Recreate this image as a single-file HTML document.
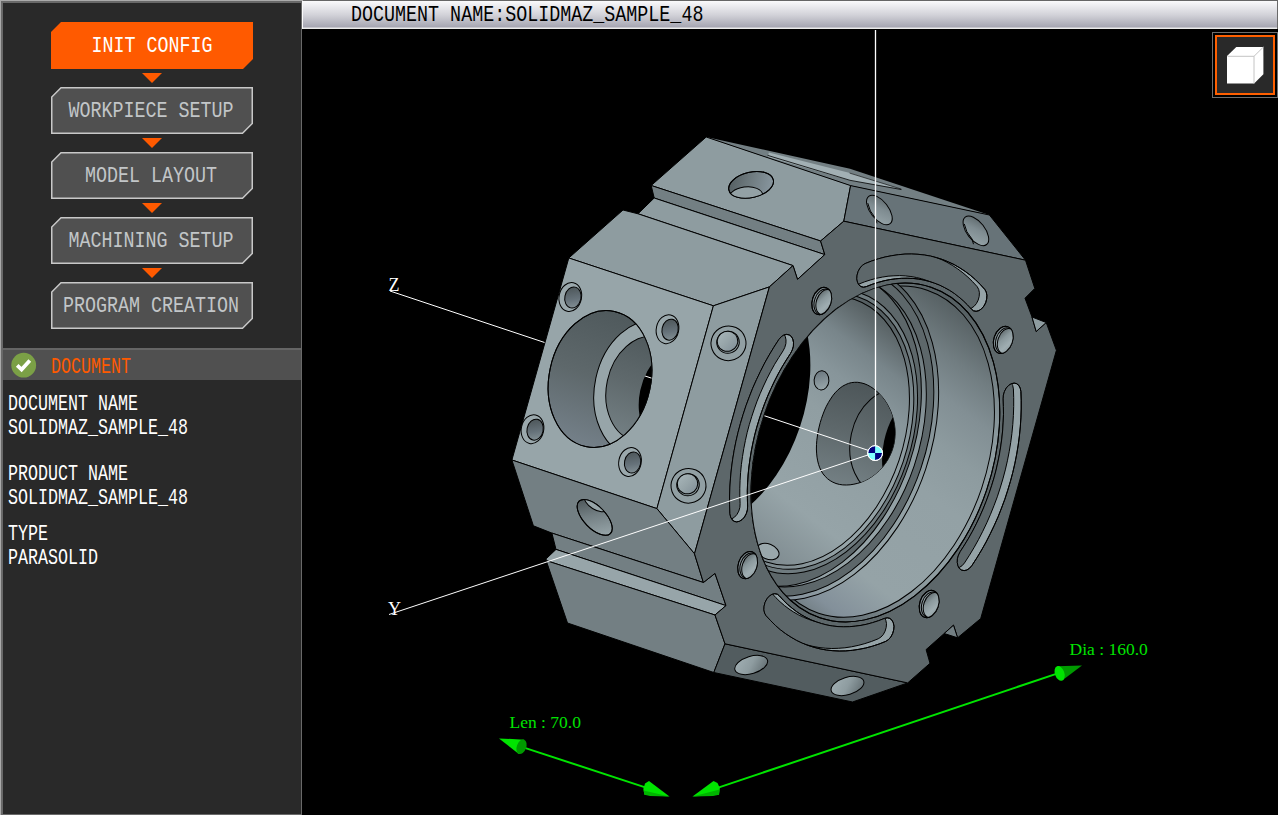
<!DOCTYPE html>
<html lang="en">
<head>
<meta charset="utf-8">
<title>SOLIDMAZ</title>
<style>
html,body{margin:0;padding:0;}
body{width:1280px;height:817px;overflow:hidden;background:#fff;position:relative;font-family:"Liberation Mono",monospace;}
#app{position:absolute;left:0;top:0;width:1278px;height:815px;background:#000;overflow:hidden;}
#left{position:absolute;left:0;top:0;width:302px;height:815px;box-sizing:border-box;background:#292929;border:1px solid #aaa;border-right:none;border-bottom:none;}
#left .inner{position:absolute;left:0;top:0;right:0;bottom:0;border:2px solid #696969;border-bottom-width:1px;border-right-width:1px;}
.btn{position:absolute;left:51px;width:202px;height:47px;}
.btn svg{position:absolute;left:0;top:0;}
.btn span{position:absolute;left:-50.7px;top:1.2px;width:302px;height:47px;line-height:47px;text-align:center;font-size:22.8px;color:#c2c6c8;white-space:pre;transform:scaleX(0.805);transform-origin:50% 50%;}
.btn.on span{color:#fff;}
.tri{position:absolute;left:142px;width:0;height:0;border-left:10px solid transparent;border-right:10px solid transparent;border-top:10px solid #ff5a00;}
#docbar{position:absolute;left:3px;top:348px;width:298px;height:32px;background:#505050;border-top:2px solid #656565;box-sizing:border-box;}
#docbar .t{position:absolute;left:48px;top:1.2px;height:32px;line-height:33px;font-size:21.2px;color:#ff5a00;transform:scaleX(0.786);transform-origin:0 50%;white-space:pre;}
.ln{position:absolute;left:8px;height:24px;line-height:24px;font-size:21.2px;color:#fff;white-space:pre;transform:scaleX(0.786);transform-origin:0 50%;}
#hdr{position:absolute;left:302px;top:0;width:976px;height:29px;box-sizing:border-box;border-left:1px solid #fafafa;border-right:1px solid #696969;border-top:1px solid #666;border-bottom:none;background:linear-gradient(#fbfbfb 0px,#f4f4f6 2px,#d2d2d8 14px,#a6a6b2 26px,#e8e8e8 27px,#eee 28px);}
#hdr span{position:absolute;left:47.8px;top:1px;height:28px;line-height:27px;font-size:22.8px;color:#000;white-space:pre;transform:scaleX(0.805);transform-origin:0 50%;}
#cube{position:absolute;left:1212px;top:32px;width:66px;height:66px;box-sizing:border-box;border:1px solid #6e6e6e;background:#000;}
#cube i{position:absolute;left:2px;top:2px;width:60px;height:60px;box-sizing:border-box;border:2px solid #ff5f00;background:#292929;}
#scene{position:absolute;left:0;top:0;}
</style>
</head>
<body>
<div id="app">
<div id="left"><div class="inner"></div></div>
<div class="btn on" style="top:22px"><svg width="202" height="47"><polygon points="10,0 202,0 202,37 192,47 0,47 0,10" fill="#ff5a00"/></svg><span style="margin-left:1px">INIT CONFIG</span></div>
<div class="tri" style="top:73px"></div>
<div class="btn" style="top:87px"><svg width="202" height="47"><polygon points="10,0.75 201.25,0.75 201.25,36.5 191.5,46.25 0.75,46.25 0.75,10" fill="#505050" stroke="#c8c8c8" stroke-width="1.5"/></svg><span>WORKPIECE SETUP</span></div>
<div class="tri" style="top:138px"></div>
<div class="btn" style="top:152px"><svg width="202" height="47"><polygon points="10,0.75 201.25,0.75 201.25,36.5 191.5,46.25 0.75,46.25 0.75,10" fill="#505050" stroke="#c8c8c8" stroke-width="1.5"/></svg><span>MODEL LAYOUT</span></div>
<div class="tri" style="top:203px"></div>
<div class="btn" style="top:217px"><svg width="202" height="47"><polygon points="10,0.75 201.25,0.75 201.25,36.5 191.5,46.25 0.75,46.25 0.75,10" fill="#505050" stroke="#c8c8c8" stroke-width="1.5"/></svg><span>MACHINING SETUP</span></div>
<div class="tri" style="top:268px"></div>
<div class="btn" style="top:282px"><svg width="202" height="47"><polygon points="10,0.75 201.25,0.75 201.25,36.5 191.5,46.25 0.75,46.25 0.75,10" fill="#505050" stroke="#c8c8c8" stroke-width="1.5"/></svg><span>PROGRAM CREATION</span></div>
<div id="docbar"><svg width="40" height="32" style="position:absolute;left:8px;top:1.8px"><circle cx="12.7" cy="13.2" r="12.4" fill="#7ba046"/><path d="M6.2 13.4 L10.6 17.6 L18.8 8.6" fill="none" stroke="#fff" stroke-width="3.7" stroke-linecap="butt" stroke-linejoin="miter"/></svg><span class="t">DOCUMENT</span></div>
<div class="ln" style="top:391.5px">DOCUMENT NAME</div>
<div class="ln" style="top:415.5px">SOLIDMAZ_SAMPLE_48</div>
<div class="ln" style="top:461.5px">PRODUCT NAME</div>
<div class="ln" style="top:485.5px">SOLIDMAZ_SAMPLE_48</div>
<div class="ln" style="top:521.5px">TYPE</div>
<div class="ln" style="top:545.5px">PARASOLID</div>
<div id="hdr"><span>DOCUMENT NAME:SOLIDMAZ_SAMPLE_48</span></div>
<svg id="scene" width="1280" height="817" viewBox="0 0 1280 817">
<defs><clipPath id="cs0"><polygon points="865.1,263.6 871.7,261.0 878.4,258.8 885.1,257.0 891.8,255.7 898.4,254.7 905.0,254.1 911.5,254.0 918.0,254.3 924.3,255.0 930.6,256.1 936.7,257.7 942.7,259.6 948.6,262.0 954.3,264.7 959.8,267.9 965.2,271.4 970.4,275.3 975.4,279.6 980.1,284.3 984.7,289.3 986.2,291.9 986.9,295.2 986.7,298.9 985.7,302.7 983.9,306.1 981.6,308.8 978.9,310.6 976.1,311.3 973.5,310.8 971.4,309.1 967.4,304.7 963.2,300.6 958.8,296.9 954.3,293.4 949.6,290.3 944.7,287.6 939.7,285.1 934.5,283.1 929.3,281.4 923.9,280.0 918.4,279.0 912.8,278.4 907.1,278.2 901.4,278.3 895.6,278.8 889.8,279.6 883.9,280.8 878.1,282.4 872.2,284.3 866.3,286.6 863.5,287.2 861.0,286.6 858.9,284.9 857.5,282.2 856.8,278.8 857.1,275.1 858.2,271.4 860.0,268.0 862.4,265.3"/></clipPath><clipPath id="cs1"><polygon points="1020.9,391.4 1021.2,400.2 1021.2,409.0 1020.9,417.9 1020.3,426.9 1019.4,436.0 1018.2,445.1 1016.7,454.2 1014.9,463.3 1012.8,472.4 1010.4,481.4 1007.7,490.4 1004.8,499.3 1001.5,508.1 998.1,516.8 994.3,525.3 990.3,533.7 986.1,542.0 981.6,550.0 976.9,557.8 972.0,565.4 969.6,568.2 966.9,570.0 964.2,570.6 961.6,570.1 959.4,568.5 958.0,565.9 957.3,562.6 957.4,558.8 958.5,555.1 960.2,551.7 964.5,545.0 968.7,538.1 972.6,531.1 976.3,523.9 979.8,516.5 983.1,509.0 986.2,501.3 989.0,493.6 991.6,485.8 994.0,477.9 996.1,470.0 997.9,462.0 999.5,454.0 1000.8,446.0 1001.9,438.0 1002.7,430.0 1003.2,422.1 1003.5,414.3 1003.4,406.5 1003.2,398.9 1003.4,395.1 1004.5,391.4 1006.3,388.0 1008.7,385.4 1011.4,383.7 1014.2,383.1 1016.7,383.7 1018.8,385.4 1020.2,388.1"/></clipPath><clipPath id="cs2"><polygon points="885.7,641.4 879.1,644.0 872.4,646.2 865.7,648.0 859.0,649.3 852.4,650.3 845.8,650.9 839.3,651.0 832.8,650.7 826.5,650.0 820.2,648.9 814.1,647.3 808.1,645.4 802.2,643.0 796.5,640.3 791.0,637.1 785.6,633.6 780.4,629.7 775.4,625.4 770.7,620.7 766.1,615.7 764.6,613.1 763.9,609.8 764.1,606.1 765.1,602.3 766.9,598.9 769.2,596.2 771.9,594.4 774.7,593.7 777.3,594.2 779.4,595.9 783.4,600.3 787.6,604.4 792.0,608.1 796.5,611.6 801.2,614.7 806.1,617.4 811.1,619.9 816.3,621.9 821.5,623.6 826.9,625.0 832.4,626.0 838.0,626.6 843.7,626.8 849.4,626.7 855.2,626.2 861.0,625.4 866.9,624.2 872.7,622.6 878.6,620.7 884.5,618.4 887.3,617.8 889.8,618.4 891.9,620.1 893.3,622.8 894.0,626.2 893.7,629.9 892.6,633.6 890.8,637.0 888.4,639.7"/></clipPath><clipPath id="cs3"><polygon points="729.9,513.6 729.6,504.8 729.6,496.0 729.9,487.1 730.5,478.1 731.4,469.0 732.6,459.9 734.1,450.8 735.9,441.7 738.0,432.6 740.4,423.6 743.1,414.6 746.0,405.7 749.3,396.9 752.7,388.2 756.5,379.7 760.5,371.3 764.7,363.0 769.2,355.0 773.9,347.2 778.8,339.6 781.2,336.8 783.9,335.0 786.6,334.4 789.2,334.9 791.4,336.5 792.8,339.1 793.5,342.4 793.4,346.2 792.3,349.9 790.6,353.3 786.3,360.0 782.1,366.9 778.2,373.9 774.5,381.1 771.0,388.5 767.7,396.0 764.6,403.7 761.8,411.4 759.2,419.2 756.8,427.1 754.7,435.0 752.9,443.0 751.3,451.0 750.0,459.0 748.9,467.0 748.1,475.0 747.6,482.9 747.3,490.7 747.4,498.5 747.6,506.1 747.4,509.9 746.3,513.6 744.5,517.0 742.1,519.6 739.4,521.3 736.6,521.9 734.1,521.3 732.0,519.6 730.6,516.9"/></clipPath><linearGradient id="gbh" x1="0.1" y1="0.1" x2="0.9" y2="0.8"><stop offset="0" stop-color="#5f696c"/><stop offset="0.35" stop-color="#8a989c"/><stop offset="0.7" stop-color="#9fadb1"/><stop offset="1" stop-color="#8e9ca0"/></linearGradient><clipPath id="cbh45"><ellipse cx="1003.2" cy="339.9" rx="9.4" ry="14.0" transform="rotate(18.6 1003.2 339.9)"/></clipPath><clipPath id="cbh135"><ellipse cx="929.1" cy="604.0" rx="9.4" ry="14.0" transform="rotate(18.6 929.1 604.0)"/></clipPath><clipPath id="cbh225"><ellipse cx="747.6" cy="565.1" rx="9.4" ry="14.0" transform="rotate(18.6 747.6 565.1)"/></clipPath><clipPath id="cbh315"><ellipse cx="821.7" cy="301.0" rx="9.4" ry="14.0" transform="rotate(18.6 821.7 301.0)"/></clipPath><linearGradient id="gc1" gradientUnits="userSpaceOnUse" x1="902.9" y1="278.1" x2="791.8" y2="608.0"><stop offset="0" stop-color="#525c5f"/><stop offset="0.04" stop-color="#5a6467"/><stop offset="0.15" stop-color="#717d81"/><stop offset="0.25" stop-color="#828f94"/><stop offset="0.37" stop-color="#8d9b9f"/><stop offset="0.5" stop-color="#93a1a5"/><stop offset="0.8" stop-color="#95a3a7"/><stop offset="0.93" stop-color="#83909a"/><stop offset="1" stop-color="#6c787c"/></linearGradient><linearGradient id="gc2" gradientUnits="userSpaceOnUse" x1="807.5" y1="283.0" x2="718.9" y2="546.5"><stop offset="0" stop-color="#525c5f"/><stop offset="0.05" stop-color="#5e686b"/><stop offset="0.16" stop-color="#78858a"/><stop offset="0.28" stop-color="#87959a"/><stop offset="0.42" stop-color="#909ea2"/><stop offset="0.75" stop-color="#96a4a8"/><stop offset="1" stop-color="#7b878c"/></linearGradient><linearGradient id="gch" gradientUnits="userSpaceOnUse" x1="902.9" y1="278.1" x2="791.8" y2="608.0"><stop offset="0" stop-color="#4f595c"/><stop offset="0.05" stop-color="#5f696c"/><stop offset="0.12" stop-color="#737f83"/><stop offset="0.22" stop-color="#87959a"/><stop offset="0.3" stop-color="#8e9ca0"/><stop offset="0.7" stop-color="#8e9ca0"/><stop offset="0.82" stop-color="#7b878c"/><stop offset="0.92" stop-color="#687479"/><stop offset="1" stop-color="#5c6669"/></linearGradient><clipPath id="cpb"><ellipse cx="875.4" cy="452.5" rx="117.4" ry="174.3" transform="rotate(18.6 875.4 452.5)"/></clipPath><linearGradient id="gsh" x1="0" y1="0" x2="0.3" y2="1"><stop offset="0" stop-color="#66727a"/><stop offset="1" stop-color="#96a4a8"/></linearGradient><clipPath id="csb"><polygon points="864.0,383.6 860.8,382.8 857.7,382.3 854.6,382.3 851.5,382.6 848.5,383.4 845.6,384.6 842.8,386.1 840.1,388.0 837.5,390.3 835.0,392.9 832.7,395.8 830.5,399.1 828.4,402.5 826.4,406.2 824.6,410.1 823.0,414.2 821.5,418.4 820.2,422.7 819.1,427.1 818.1,431.5 817.4,436.0 816.8,440.4 816.5,444.7 816.4,449.0 816.6,453.1 817.0,457.1 817.7,460.9 818.6,464.5 819.8,467.9 821.3,471.0 823.1,473.9 825.2,476.4 827.5,478.7 830.1,480.6 832.9,482.2 836.0,483.5 839.3,484.4 842.7,484.9 846.4,485.0 850.1,484.8 853.9,484.2 857.8,483.3 861.7,482.0 865.5,480.3 869.3,478.3 872.9,475.9 876.3,473.2 879.6,470.2 882.6,467.0 885.4,463.4 887.8,459.7 889.9,455.7 891.7,451.5 893.1,447.3 894.2,442.8 894.8,438.4 895.1,433.8 895.0,429.3 894.5,424.8 893.6,420.3 892.4,416.0 890.9,411.7 889.1,407.7 887.0,403.8 884.7,400.2 882.1,396.8 879.3,393.8 876.5,391.0 873.4,388.6 870.4,386.6 867.2,384.9"/></clipPath><linearGradient id="gsb" gradientUnits="userSpaceOnUse" x1="870.0" y1="385.0" x2="845.0" y2="485.0"><stop offset="0" stop-color="#4d5659"/><stop offset="0.5" stop-color="#5e686b"/><stop offset="1" stop-color="#737f83"/></linearGradient><clipPath id="csb2"><ellipse cx="889.6" cy="442.1" rx="39.1" ry="53.0" transform="rotate(12.1 889.6 442.1)"/></clipPath><linearGradient id="glb" gradientUnits="userSpaceOnUse" x1="610.0" y1="310.0" x2="590.0" y2="450.0"><stop offset="0" stop-color="#4f595c"/><stop offset="0.5" stop-color="#5e686b"/><stop offset="1" stop-color="#75818a"/></linearGradient><linearGradient id="glb2" gradientUnits="userSpaceOnUse" x1="650.0" y1="335.0" x2="635.0" y2="440.0"><stop offset="0" stop-color="#4f595c"/><stop offset="0.5" stop-color="#5f696c"/><stop offset="1" stop-color="#737f83"/></linearGradient><clipPath id="clb0"><ellipse cx="600.0" cy="379.0" rx="50.9" ry="69.0" transform="rotate(12.1 600.0 379.0)"/></clipPath><clipPath id="clb1"><ellipse cx="645.6" cy="388.8" rx="39.1" ry="53.0" transform="rotate(12.1 645.6 388.8)"/></clipPath><clipPath id="clbz"><ellipse cx="678.5" cy="398.5" rx="39.1" ry="53.0" transform="rotate(12.1 678.5 398.5)"/></clipPath><linearGradient id="gsm" x1="0.3" y1="0" x2="0.6" y2="1"><stop offset="0" stop-color="#4c5558"/><stop offset="0.6" stop-color="#66727a"/><stop offset="1" stop-color="#828f94"/></linearGradient><linearGradient id="gst" x1="0.2" y1="0" x2="0.7" y2="1"><stop offset="0" stop-color="#a6b4b8"/><stop offset="0.5" stop-color="#97a5a9"/><stop offset="1" stop-color="#84929a"/></linearGradient><linearGradient id="gth" x1="0" y1="0" x2="1" y2="0.3"><stop offset="0" stop-color="#4f595c"/><stop offset="0.5" stop-color="#6c787c"/><stop offset="1" stop-color="#84929a"/></linearGradient><clipPath id="cth"><ellipse cx="751.1" cy="184.9" rx="22.8" ry="12.7" transform="rotate(-13.0 751.1 184.9)"/></clipPath><linearGradient id="gll" x1="0" y1="0.3" x2="1" y2="0.6"><stop offset="0" stop-color="#4c5558"/><stop offset="0.45" stop-color="#737f83"/><stop offset="1" stop-color="#97a5a9"/></linearGradient><clipPath id="cll"><ellipse cx="594.7" cy="517.4" rx="22.5" ry="11.0" transform="rotate(46.0 594.7 517.4)"/></clipPath><linearGradient id="gbd" x1="0" y1="0" x2="1" y2="1"><stop offset="0" stop-color="#566063"/><stop offset="0.45" stop-color="#7f8c91"/><stop offset="1" stop-color="#9aa8ac"/></linearGradient><linearGradient id="gbc" x1="0" y1="0" x2="1" y2="0.5"><stop offset="0" stop-color="#a3b1b5"/><stop offset="0.6" stop-color="#8e9ca0"/><stop offset="1" stop-color="#6c787c"/></linearGradient></defs>
<line x1="390" y1="291" x2="875" y2="452.6" stroke="#fff" stroke-width="1"/>
<polygon points="706.2,137.0 850.0,168.8 989.4,215.0 850.6,185.6" fill="#737f83" stroke="none" stroke-width="1" stroke-linejoin="round" />
<polygon points="768.8,152.5 850.0,173.0 900.0,188.8 850.0,180.5 768.0,157.0" fill="#a2b0b4" stroke="none" stroke-width="1" stroke-linejoin="round" />
<polyline points="768.0,155.5 850.0,180.3 901.0,189.5" fill="none" stroke="#000" stroke-width="0.8" stroke-linejoin="round" stroke-linecap="round" />
<polyline points="850.0,173.2 901.0,189.0" fill="none" stroke="#000" stroke-width="0.6" stroke-linejoin="round" stroke-linecap="round" />
<polygon points="706.2,137.0 651.2,185.5 820.6,241.0 843.8,221.2 850.6,185.6" fill="#8e9ca0" stroke="#000" stroke-width="1" stroke-linejoin="round" />
<polygon points="651.2,185.5 654.2,198.0 824.8,254.6 820.6,241.0" fill="#737f83" stroke="#000" stroke-width="1" stroke-linejoin="round" />
<polygon points="654.2,198.0 638.0,213.8 793.0,265.6 797.5,279.4 824.8,254.6" fill="#8e9ca0" stroke="#000" stroke-width="1" stroke-linejoin="round" />
<polygon points="623.0,210.0 568.8,258.0 713.4,305.8 769.4,286.9 793.0,265.6 638.0,213.8" fill="#8e9ca0" stroke="#000" stroke-width="1" stroke-linejoin="round" />
<polygon points="568.8,258.0 713.4,305.8 656.9,508.6 511.9,460.0" fill="#97a5a9" stroke="#000" stroke-width="1" stroke-linejoin="round" />
<polygon points="713.4,305.8 769.4,286.9 694.5,553.8 656.9,508.6" fill="#8e9ca0" stroke="#000" stroke-width="1" stroke-linejoin="round" />
<polygon points="511.9,460.0 656.9,508.6 694.5,553.8 703.4,582.5 551.9,533.1 533.4,525.8" fill="#737f83" stroke="#000" stroke-width="1" stroke-linejoin="round" />
<polygon points="551.9,533.1 703.4,582.5 715.0,573.4 726.0,605.6 556.0,549.4" fill="#737f83" stroke="#000" stroke-width="1" stroke-linejoin="round" />
<polygon points="556.0,549.4 726.0,605.6 715.0,615.0 546.2,560.6 546.2,558.8" fill="#97a5a9" stroke="#000" stroke-width="1" stroke-linejoin="round" />
<polygon points="546.2,560.6 715.0,615.0 725.0,643.8 713.8,672.5 567.5,623.0" fill="#737f83" stroke="#000" stroke-width="1" stroke-linejoin="round" />
<polygon points="725.0,643.8 713.8,672.5 852.5,702.0 907.7,682.9" fill="#525c5f" stroke="#000" stroke-width="1" stroke-linejoin="round" />
<polygon points="850.6,185.6 989.4,215.0 1025.5,260.2 843.8,221.2" fill="#677378" stroke="#000" stroke-width="1" stroke-linejoin="round" />
<polygon points="769.4,286.9 793.0,265.6 797.5,279.4 824.8,254.6 820.6,241.0 843.8,221.2 1025.5,260.2 1034.8,288.4 1025.0,298.2 1032.0,317.0 1036.2,331.5 1046.2,322.5 1056.4,350.3 980.7,618.6 957.6,637.8 953.5,625.2 944.2,633.5 926.1,649.6 930.0,663.3 907.7,682.9 725.0,643.8 715.0,615.0 726.0,605.6 715.0,573.4 703.4,582.5 694.5,553.8" fill="#5d676a" stroke="#000" stroke-width="1" stroke-linejoin="round" />
<polygon points="1032.0,317.0 1046.2,322.5 1036.2,331.5" fill="#8e9ca0" stroke="#000" stroke-width="1" stroke-linejoin="round" />
<polygon points="953.5,625.2 957.6,637.8 944.2,633.5" fill="#737f83" stroke="#000" stroke-width="1" stroke-linejoin="round" />
<polygon points="865.1,263.6 871.7,261.0 878.4,258.8 885.1,257.0 891.8,255.7 898.4,254.7 905.0,254.1 911.5,254.0 918.0,254.3 924.3,255.0 930.6,256.1 936.7,257.7 942.7,259.6 948.6,262.0 954.3,264.7 959.8,267.9 965.2,271.4 970.4,275.3 975.4,279.6 980.1,284.3 984.7,289.3 986.2,291.9 986.9,295.2 986.7,298.9 985.7,302.7 983.9,306.1 981.6,308.8 978.9,310.6 976.1,311.3 973.5,310.8 971.4,309.1 967.4,304.7 963.2,300.6 958.8,296.9 954.3,293.4 949.6,290.3 944.7,287.6 939.7,285.1 934.5,283.1 929.3,281.4 923.9,280.0 918.4,279.0 912.8,278.4 907.1,278.2 901.4,278.3 895.6,278.8 889.8,279.6 883.9,280.8 878.1,282.4 872.2,284.3 866.3,286.6 863.5,287.2 861.0,286.6 858.9,284.9 857.5,282.2 856.8,278.8 857.1,275.1 858.2,271.4 860.0,268.0 862.4,265.3" fill="#95a3a7" stroke="#000" stroke-width="1" stroke-linejoin="round" />
<g clip-path="url(#cs0)"><polygon points="857.6,261.1 864.2,258.5 870.9,256.3 877.6,254.5 884.3,253.1 890.9,252.2 897.5,251.6 904.0,251.5 910.5,251.8 916.8,252.5 923.1,253.6 929.2,255.1 935.2,257.1 941.1,259.4 946.8,262.2 952.3,265.3 957.7,268.9 962.9,272.8 967.9,277.1 972.6,281.7 977.2,286.7 978.7,289.4 979.4,292.7 979.2,296.4 978.2,300.1 976.4,303.6 974.1,306.3 971.4,308.1 968.6,308.8 966.0,308.2 963.9,306.6 959.9,302.2 955.7,298.1 951.3,294.4 946.8,290.9 942.1,287.8 937.2,285.0 932.2,282.6 927.0,280.6 921.8,278.8 916.4,277.5 910.9,276.5 905.3,275.9 899.6,275.6 893.9,275.8 888.1,276.2 882.3,277.1 876.4,278.3 870.6,279.9 864.7,281.8 858.8,284.1 856.0,284.7 853.5,284.1 851.4,282.4 850.0,279.7 849.3,276.3 849.6,272.6 850.7,268.9 852.5,265.5 854.8,262.8" fill="#5d676a" stroke="#000" stroke-width="1" stroke-linejoin="round" /></g>
<polygon points="865.1,263.6 871.7,261.0 878.4,258.8 885.1,257.0 891.8,255.7 898.4,254.7 905.0,254.1 911.5,254.0 918.0,254.3 924.3,255.0 930.6,256.1 936.7,257.7 942.7,259.6 948.6,262.0 954.3,264.7 959.8,267.9 965.2,271.4 970.4,275.3 975.4,279.6 980.1,284.3 984.7,289.3 986.2,291.9 986.9,295.2 986.7,298.9 985.7,302.7 983.9,306.1 981.6,308.8 978.9,310.6 976.1,311.3 973.5,310.8 971.4,309.1 967.4,304.7 963.2,300.6 958.8,296.9 954.3,293.4 949.6,290.3 944.7,287.6 939.7,285.1 934.5,283.1 929.3,281.4 923.9,280.0 918.4,279.0 912.8,278.4 907.1,278.2 901.4,278.3 895.6,278.8 889.8,279.6 883.9,280.8 878.1,282.4 872.2,284.3 866.3,286.6 863.5,287.2 861.0,286.6 858.9,284.9 857.5,282.2 856.8,278.8 857.1,275.1 858.2,271.4 860.0,268.0 862.4,265.3" fill="none" stroke="#000" stroke-width="1" stroke-linejoin="round" />
<polygon points="1020.9,391.4 1021.2,400.2 1021.2,409.0 1020.9,417.9 1020.3,426.9 1019.4,436.0 1018.2,445.1 1016.7,454.2 1014.9,463.3 1012.8,472.4 1010.4,481.4 1007.7,490.4 1004.8,499.3 1001.5,508.1 998.1,516.8 994.3,525.3 990.3,533.7 986.1,542.0 981.6,550.0 976.9,557.8 972.0,565.4 969.6,568.2 966.9,570.0 964.2,570.6 961.6,570.1 959.4,568.5 958.0,565.9 957.3,562.6 957.4,558.8 958.5,555.1 960.2,551.7 964.5,545.0 968.7,538.1 972.6,531.1 976.3,523.9 979.8,516.5 983.1,509.0 986.2,501.3 989.0,493.6 991.6,485.8 994.0,477.9 996.1,470.0 997.9,462.0 999.5,454.0 1000.8,446.0 1001.9,438.0 1002.7,430.0 1003.2,422.1 1003.5,414.3 1003.4,406.5 1003.2,398.9 1003.4,395.1 1004.5,391.4 1006.3,388.0 1008.7,385.4 1011.4,383.7 1014.2,383.1 1016.7,383.7 1018.8,385.4 1020.2,388.1" fill="#95a3a7" stroke="#000" stroke-width="1" stroke-linejoin="round" />
<g clip-path="url(#cs1)"><polygon points="1013.4,388.9 1013.7,397.6 1013.7,406.5 1013.4,415.4 1012.8,424.4 1011.9,433.5 1010.7,442.6 1009.2,451.7 1007.4,460.8 1005.3,469.9 1002.9,478.9 1000.2,487.9 997.3,496.8 994.0,505.6 990.5,514.3 986.8,522.8 982.8,531.2 978.6,539.4 974.1,547.5 969.4,555.3 964.5,562.9 962.1,565.7 959.4,567.4 956.7,568.1 954.1,567.6 951.9,566.0 950.5,563.4 949.8,560.0 949.9,556.3 950.9,552.6 952.7,549.2 957.0,542.5 961.2,535.6 965.1,528.6 968.8,521.3 972.3,514.0 975.6,506.4 978.7,498.8 981.5,491.1 984.1,483.3 986.5,475.4 988.6,467.4 990.4,459.5 992.0,451.5 993.3,443.5 994.4,435.5 995.2,427.5 995.7,419.6 996.0,411.8 995.9,404.0 995.7,396.3 995.9,392.6 997.0,388.9 998.8,385.5 1001.2,382.8 1003.9,381.1 1006.7,380.5 1009.2,381.1 1011.3,382.9 1012.7,385.5" fill="#5d676a" stroke="#000" stroke-width="1" stroke-linejoin="round" /></g>
<polygon points="1020.9,391.4 1021.2,400.2 1021.2,409.0 1020.9,417.9 1020.3,426.9 1019.4,436.0 1018.2,445.1 1016.7,454.2 1014.9,463.3 1012.8,472.4 1010.4,481.4 1007.7,490.4 1004.8,499.3 1001.5,508.1 998.1,516.8 994.3,525.3 990.3,533.7 986.1,542.0 981.6,550.0 976.9,557.8 972.0,565.4 969.6,568.2 966.9,570.0 964.2,570.6 961.6,570.1 959.4,568.5 958.0,565.9 957.3,562.6 957.4,558.8 958.5,555.1 960.2,551.7 964.5,545.0 968.7,538.1 972.6,531.1 976.3,523.9 979.8,516.5 983.1,509.0 986.2,501.3 989.0,493.6 991.6,485.8 994.0,477.9 996.1,470.0 997.9,462.0 999.5,454.0 1000.8,446.0 1001.9,438.0 1002.7,430.0 1003.2,422.1 1003.5,414.3 1003.4,406.5 1003.2,398.9 1003.4,395.1 1004.5,391.4 1006.3,388.0 1008.7,385.4 1011.4,383.7 1014.2,383.1 1016.7,383.7 1018.8,385.4 1020.2,388.1" fill="none" stroke="#000" stroke-width="1" stroke-linejoin="round" />
<polygon points="885.7,641.4 879.1,644.0 872.4,646.2 865.7,648.0 859.0,649.3 852.4,650.3 845.8,650.9 839.3,651.0 832.8,650.7 826.5,650.0 820.2,648.9 814.1,647.3 808.1,645.4 802.2,643.0 796.5,640.3 791.0,637.1 785.6,633.6 780.4,629.7 775.4,625.4 770.7,620.7 766.1,615.7 764.6,613.1 763.9,609.8 764.1,606.1 765.1,602.3 766.9,598.9 769.2,596.2 771.9,594.4 774.7,593.7 777.3,594.2 779.4,595.9 783.4,600.3 787.6,604.4 792.0,608.1 796.5,611.6 801.2,614.7 806.1,617.4 811.1,619.9 816.3,621.9 821.5,623.6 826.9,625.0 832.4,626.0 838.0,626.6 843.7,626.8 849.4,626.7 855.2,626.2 861.0,625.4 866.9,624.2 872.7,622.6 878.6,620.7 884.5,618.4 887.3,617.8 889.8,618.4 891.9,620.1 893.3,622.8 894.0,626.2 893.7,629.9 892.6,633.6 890.8,637.0 888.4,639.7" fill="#95a3a7" stroke="#000" stroke-width="1" stroke-linejoin="round" />
<g clip-path="url(#cs2)"><polygon points="878.2,638.8 871.6,641.4 864.9,643.6 858.2,645.4 851.5,646.8 844.9,647.8 838.3,648.3 831.8,648.5 825.3,648.2 819.0,647.5 812.7,646.3 806.6,644.8 800.6,642.9 794.7,640.5 789.0,637.8 783.5,634.6 778.1,631.1 772.9,627.2 767.9,622.9 763.2,618.2 758.6,613.2 757.1,610.6 756.4,607.3 756.6,603.5 757.6,599.8 759.4,596.4 761.7,593.7 764.4,591.9 767.2,591.2 769.8,591.7 771.9,593.3 775.9,597.7 780.1,601.8 784.5,605.6 789.0,609.0 793.7,612.1 798.6,614.9 803.6,617.3 808.8,619.4 814.0,621.1 819.4,622.5 824.9,623.4 830.5,624.1 836.2,624.3 841.9,624.2 847.7,623.7 853.5,622.9 859.4,621.6 865.2,620.1 871.1,618.1 877.0,615.9 879.7,615.3 882.3,615.9 884.4,617.6 885.8,620.3 886.5,623.6 886.2,627.4 885.1,631.1 883.3,634.5 880.9,637.1" fill="#5d676a" stroke="#000" stroke-width="1" stroke-linejoin="round" /></g>
<polygon points="885.7,641.4 879.1,644.0 872.4,646.2 865.7,648.0 859.0,649.3 852.4,650.3 845.8,650.9 839.3,651.0 832.8,650.7 826.5,650.0 820.2,648.9 814.1,647.3 808.1,645.4 802.2,643.0 796.5,640.3 791.0,637.1 785.6,633.6 780.4,629.7 775.4,625.4 770.7,620.7 766.1,615.7 764.6,613.1 763.9,609.8 764.1,606.1 765.1,602.3 766.9,598.9 769.2,596.2 771.9,594.4 774.7,593.7 777.3,594.2 779.4,595.9 783.4,600.3 787.6,604.4 792.0,608.1 796.5,611.6 801.2,614.7 806.1,617.4 811.1,619.9 816.3,621.9 821.5,623.6 826.9,625.0 832.4,626.0 838.0,626.6 843.7,626.8 849.4,626.7 855.2,626.2 861.0,625.4 866.9,624.2 872.7,622.6 878.6,620.7 884.5,618.4 887.3,617.8 889.8,618.4 891.9,620.1 893.3,622.8 894.0,626.2 893.7,629.9 892.6,633.6 890.8,637.0 888.4,639.7" fill="none" stroke="#000" stroke-width="1" stroke-linejoin="round" />
<polygon points="729.9,513.6 729.6,504.8 729.6,496.0 729.9,487.1 730.5,478.1 731.4,469.0 732.6,459.9 734.1,450.8 735.9,441.7 738.0,432.6 740.4,423.6 743.1,414.6 746.0,405.7 749.3,396.9 752.7,388.2 756.5,379.7 760.5,371.3 764.7,363.0 769.2,355.0 773.9,347.2 778.8,339.6 781.2,336.8 783.9,335.0 786.6,334.4 789.2,334.9 791.4,336.5 792.8,339.1 793.5,342.4 793.4,346.2 792.3,349.9 790.6,353.3 786.3,360.0 782.1,366.9 778.2,373.9 774.5,381.1 771.0,388.5 767.7,396.0 764.6,403.7 761.8,411.4 759.2,419.2 756.8,427.1 754.7,435.0 752.9,443.0 751.3,451.0 750.0,459.0 748.9,467.0 748.1,475.0 747.6,482.9 747.3,490.7 747.4,498.5 747.6,506.1 747.4,509.9 746.3,513.6 744.5,517.0 742.1,519.6 739.4,521.3 736.6,521.9 734.1,521.3 732.0,519.6 730.6,516.9" fill="#95a3a7" stroke="#000" stroke-width="1" stroke-linejoin="round" />
<g clip-path="url(#cs3)"><polygon points="722.4,511.0 722.1,502.3 722.1,493.5 722.4,484.5 723.0,475.5 723.9,466.5 725.1,457.4 726.6,448.3 728.4,439.2 730.5,430.1 732.9,421.0 735.6,412.1 738.5,403.2 741.8,394.4 745.2,385.7 749.0,377.1 753.0,368.7 757.2,360.5 761.7,352.5 766.4,344.6 771.3,337.0 773.7,334.3 776.4,332.5 779.1,331.8 781.7,332.3 783.9,334.0 785.3,336.6 786.0,339.9 785.9,343.6 784.8,347.4 783.1,350.8 778.8,357.5 774.6,364.3 770.7,371.4 767.0,378.6 763.5,386.0 760.2,393.5 757.1,401.1 754.3,408.9 751.7,416.7 749.3,424.6 747.2,432.5 745.4,440.5 743.8,448.5 742.5,456.5 741.4,464.5 740.6,472.4 740.1,480.3 739.8,488.2 739.8,495.9 740.1,503.6 739.9,507.3 738.8,511.1 737.0,514.4 734.6,517.1 731.9,518.8 729.1,519.4 726.6,518.8 724.5,517.1 723.1,514.4" fill="#5d676a" stroke="#000" stroke-width="1" stroke-linejoin="round" /></g>
<polygon points="729.9,513.6 729.6,504.8 729.6,496.0 729.9,487.1 730.5,478.1 731.4,469.0 732.6,459.9 734.1,450.8 735.9,441.7 738.0,432.6 740.4,423.6 743.1,414.6 746.0,405.7 749.3,396.9 752.7,388.2 756.5,379.7 760.5,371.3 764.7,363.0 769.2,355.0 773.9,347.2 778.8,339.6 781.2,336.8 783.9,335.0 786.6,334.4 789.2,334.9 791.4,336.5 792.8,339.1 793.5,342.4 793.4,346.2 792.3,349.9 790.6,353.3 786.3,360.0 782.1,366.9 778.2,373.9 774.5,381.1 771.0,388.5 767.7,396.0 764.6,403.7 761.8,411.4 759.2,419.2 756.8,427.1 754.7,435.0 752.9,443.0 751.3,451.0 750.0,459.0 748.9,467.0 748.1,475.0 747.6,482.9 747.3,490.7 747.4,498.5 747.6,506.1 747.4,509.9 746.3,513.6 744.5,517.0 742.1,519.6 739.4,521.3 736.6,521.9 734.1,521.3 732.0,519.6 730.6,516.9" fill="none" stroke="#000" stroke-width="1" stroke-linejoin="round" />
<ellipse cx="1003.2" cy="339.9" rx="9.4" ry="14.0" transform="rotate(18.6 1003.2 339.9)" fill="#7b878c" stroke="#000" stroke-width="1" />
<g clip-path="url(#cbh45)"><ellipse cx="1004.8" cy="340.5" rx="8.8" ry="13.0" transform="rotate(18.6 1004.8 340.5)" fill="#8e9ca0" stroke="#000" stroke-width="1" /><ellipse cx="1006.4" cy="341.1" rx="8.5" ry="13.0" transform="rotate(18.6 1006.4 341.1)" fill="url(#gbh)" stroke="#000" stroke-width="1" /></g>
<ellipse cx="1003.2" cy="339.9" rx="9.4" ry="14.0" transform="rotate(18.6 1003.2 339.9)" fill="none" stroke="#000" stroke-width="1" />
<ellipse cx="929.1" cy="604.0" rx="9.4" ry="14.0" transform="rotate(18.6 929.1 604.0)" fill="#7b878c" stroke="#000" stroke-width="1" />
<g clip-path="url(#cbh135)"><ellipse cx="930.7" cy="604.6" rx="8.8" ry="13.0" transform="rotate(18.6 930.7 604.6)" fill="#8e9ca0" stroke="#000" stroke-width="1" /><ellipse cx="932.3" cy="605.2" rx="8.5" ry="13.0" transform="rotate(18.6 932.3 605.2)" fill="url(#gbh)" stroke="#000" stroke-width="1" /></g>
<ellipse cx="929.1" cy="604.0" rx="9.4" ry="14.0" transform="rotate(18.6 929.1 604.0)" fill="none" stroke="#000" stroke-width="1" />
<ellipse cx="747.6" cy="565.1" rx="9.4" ry="14.0" transform="rotate(18.6 747.6 565.1)" fill="#7b878c" stroke="#000" stroke-width="1" />
<g clip-path="url(#cbh225)"><ellipse cx="749.2" cy="565.7" rx="8.8" ry="13.0" transform="rotate(18.6 749.2 565.7)" fill="#8e9ca0" stroke="#000" stroke-width="1" /><ellipse cx="750.8" cy="566.3" rx="8.5" ry="13.0" transform="rotate(18.6 750.8 566.3)" fill="url(#gbh)" stroke="#000" stroke-width="1" /></g>
<ellipse cx="747.6" cy="565.1" rx="9.4" ry="14.0" transform="rotate(18.6 747.6 565.1)" fill="none" stroke="#000" stroke-width="1" />
<ellipse cx="821.7" cy="301.0" rx="9.4" ry="14.0" transform="rotate(18.6 821.7 301.0)" fill="#7b878c" stroke="#000" stroke-width="1" />
<g clip-path="url(#cbh315)"><ellipse cx="823.3" cy="301.6" rx="8.8" ry="13.0" transform="rotate(18.6 823.3 301.6)" fill="#8e9ca0" stroke="#000" stroke-width="1" /><ellipse cx="824.9" cy="302.2" rx="8.5" ry="13.0" transform="rotate(18.6 824.9 302.2)" fill="url(#gbh)" stroke="#000" stroke-width="1" /></g>
<ellipse cx="821.7" cy="301.0" rx="9.4" ry="14.0" transform="rotate(18.6 821.7 301.0)" fill="none" stroke="#000" stroke-width="1" />
<ellipse cx="875.4" cy="452.5" rx="117.4" ry="174.3" transform="rotate(18.6 875.4 452.5)" fill="url(#gch)" stroke="#000" stroke-width="1" />
<g clip-path="url(#cpb)">
<ellipse cx="872.9" cy="451.7" rx="114.7" ry="170.4" transform="rotate(18.6 872.9 451.7)" fill="url(#gc1)" stroke="#000" stroke-width="1" />
<ellipse cx="815.2" cy="432.2" rx="116.5" ry="173.0" transform="rotate(18.6 815.2 432.2)" fill="url(#gc1)" stroke="#000" stroke-width="1" />
<ellipse cx="812.7" cy="431.4" rx="114.3" ry="169.7" transform="rotate(18.6 812.7 431.4)" fill="#5d676a" stroke="#000" stroke-width="1" />
<ellipse cx="812.0" cy="431.2" rx="107.9" ry="160.2" transform="rotate(18.6 812.0 431.2)" fill="url(#gc1)" stroke="#000" stroke-width="1" />
<ellipse cx="805.9" cy="429.1" rx="109.0" ry="161.8" transform="rotate(18.6 805.9 429.1)" fill="#5d676a" stroke="#000" stroke-width="1" />
<ellipse cx="813.1" cy="431.5" rx="98.6" ry="146.4" transform="rotate(18.6 813.1 431.5)" fill="#6f7b7f" stroke="#000" stroke-width="1" />
<ellipse cx="812.5" cy="431.3" rx="95.6" ry="142.0" transform="rotate(18.6 812.5 431.3)" fill="url(#gc2)" stroke="#000" stroke-width="1" />
<ellipse cx="810.6" cy="430.7" rx="93.3" ry="138.5" transform="rotate(18.6 810.6 430.7)" fill="url(#gc2)" stroke="#000" stroke-width="1" />
<ellipse cx="711.3" cy="397.3" rx="93.5" ry="138.9" transform="rotate(18.6 711.3 397.3)" fill="#000" stroke="none" stroke-width="1" />
<ellipse cx="821.5" cy="380.4" rx="7.4" ry="9.6" transform="rotate(4.0 821.5 380.4)" fill="url(#gsh)" stroke="#000" stroke-width="1" />
<ellipse cx="768.0" cy="551.5" rx="11.5" ry="7.5" transform="rotate(22.0 768.0 551.5)" fill="#9aa8ac" stroke="#000" stroke-width="1" />
<polygon points="864.0,383.6 860.8,382.8 857.7,382.3 854.6,382.3 851.5,382.6 848.5,383.4 845.6,384.6 842.8,386.1 840.1,388.0 837.5,390.3 835.0,392.9 832.7,395.8 830.5,399.1 828.4,402.5 826.4,406.2 824.6,410.1 823.0,414.2 821.5,418.4 820.2,422.7 819.1,427.1 818.1,431.5 817.4,436.0 816.8,440.4 816.5,444.7 816.4,449.0 816.6,453.1 817.0,457.1 817.7,460.9 818.6,464.5 819.8,467.9 821.3,471.0 823.1,473.9 825.2,476.4 827.5,478.7 830.1,480.6 832.9,482.2 836.0,483.5 839.3,484.4 842.7,484.9 846.4,485.0 850.1,484.8 853.9,484.2 857.8,483.3 861.7,482.0 865.5,480.3 869.3,478.3 872.9,475.9 876.3,473.2 879.6,470.2 882.6,467.0 885.4,463.4 887.8,459.7 889.9,455.7 891.7,451.5 893.1,447.3 894.2,442.8 894.8,438.4 895.1,433.8 895.0,429.3 894.5,424.8 893.6,420.3 892.4,416.0 890.9,411.7 889.1,407.7 887.0,403.8 884.7,400.2 882.1,396.8 879.3,393.8 876.5,391.0 873.4,388.6 870.4,386.6 867.2,384.9" fill="url(#gsb)" stroke="#000" stroke-width="1" stroke-linejoin="round" />
<g clip-path="url(#csb)">
<ellipse cx="889.6" cy="442.1" rx="39.1" ry="53.0" transform="rotate(12.1 889.6 442.1)" fill="url(#gsb)" stroke="#000" stroke-width="1" />
<g clip-path="url(#csb2)"><ellipse cx="933.9" cy="451.5" rx="50.9" ry="69.0" transform="rotate(12.1 933.9 451.5)" fill="#000" stroke="none" stroke-width="1" /></g>
</g>
<line x1="390" y1="291" x2="875" y2="452.6" stroke="#fff" stroke-width="1"/>
</g>
<ellipse cx="875.4" cy="452.5" rx="117.4" ry="174.3" transform="rotate(18.6 875.4 452.5)" fill="none" stroke="#000" stroke-width="1" />
<ellipse cx="600.0" cy="379.0" rx="50.9" ry="69.0" transform="rotate(12.1 600.0 379.0)" fill="url(#glb)" stroke="#000" stroke-width="1" />
<g clip-path="url(#clb0)">
<ellipse cx="645.6" cy="388.8" rx="50.9" ry="69.0" transform="rotate(12.1 645.6 388.8)" fill="#97a5a9" stroke="#000" stroke-width="1" />
<ellipse cx="645.6" cy="388.8" rx="39.1" ry="53.0" transform="rotate(12.1 645.6 388.8)" fill="url(#glb2)" stroke="#000" stroke-width="1" />
<g clip-path="url(#clb1)"><ellipse cx="678.5" cy="398.5" rx="39.1" ry="53.0" transform="rotate(12.1 678.5 398.5)" fill="#000" stroke="none" stroke-width="1" /></g>
</g>
<ellipse cx="600.0" cy="379.0" rx="50.9" ry="69.0" transform="rotate(12.1 600.0 379.0)" fill="none" stroke="#000" stroke-width="1" />
<g clip-path="url(#clb0)"><g clip-path="url(#clb1)"><g clip-path="url(#clbz)"><line x1="390" y1="291" x2="875" y2="452.6" stroke="#fff" stroke-width="1"/></g></g></g>
<ellipse cx="570.3" cy="297.0" rx="11.2" ry="14.6" transform="rotate(12.1 570.3 297.0)" fill="#9aa8ac" stroke="#000" stroke-width="1" />
<ellipse cx="572.9" cy="297.5" rx="8.1" ry="10.6" transform="rotate(12.1 572.9 297.5)" fill="url(#gsm)" stroke="#000" stroke-width="1" />
<ellipse cx="667.5" cy="329.2" rx="11.2" ry="14.6" transform="rotate(12.1 667.5 329.2)" fill="#9aa8ac" stroke="#000" stroke-width="1" />
<ellipse cx="670.1" cy="329.7" rx="8.1" ry="10.6" transform="rotate(12.1 670.1 329.7)" fill="url(#gsm)" stroke="#000" stroke-width="1" />
<ellipse cx="532.5" cy="429.2" rx="11.2" ry="14.6" transform="rotate(12.1 532.5 429.2)" fill="#9aa8ac" stroke="#000" stroke-width="1" />
<ellipse cx="535.1" cy="429.7" rx="8.1" ry="10.6" transform="rotate(12.1 535.1 429.7)" fill="url(#gsm)" stroke="#000" stroke-width="1" />
<ellipse cx="630.0" cy="462.0" rx="11.2" ry="14.6" transform="rotate(12.1 630.0 462.0)" fill="#9aa8ac" stroke="#000" stroke-width="1" />
<ellipse cx="632.6" cy="462.5" rx="8.1" ry="10.6" transform="rotate(12.1 632.6 462.5)" fill="url(#gsm)" stroke="#000" stroke-width="1" />
<ellipse cx="728.5" cy="343.3" rx="17.5" ry="17.3" transform="rotate(-20.0 728.5 343.3)" fill="#919fa3" stroke="#000" stroke-width="1" />
<ellipse cx="728.0" cy="342.3" rx="11.3" ry="11.0" transform="rotate(-20.0 728.0 342.3)" fill="#8a989c" stroke="#000" stroke-width="1" />
<ellipse cx="727.5" cy="341.3" rx="10.3" ry="10.0" transform="rotate(-20.0 727.5 341.3)" fill="url(#gst)" stroke="#000" stroke-width="1" />
<ellipse cx="688.5" cy="485.8" rx="17.5" ry="17.3" transform="rotate(-20.0 688.5 485.8)" fill="#919fa3" stroke="#000" stroke-width="1" />
<ellipse cx="688.0" cy="484.8" rx="11.3" ry="11.0" transform="rotate(-20.0 688.0 484.8)" fill="#8a989c" stroke="#000" stroke-width="1" />
<ellipse cx="687.5" cy="483.8" rx="10.3" ry="10.0" transform="rotate(-20.0 687.5 483.8)" fill="url(#gst)" stroke="#000" stroke-width="1" />
<ellipse cx="751.1" cy="184.9" rx="22.8" ry="12.7" transform="rotate(-13.0 751.1 184.9)" fill="url(#gth)" stroke="#000" stroke-width="1" />
<g clip-path="url(#cth)"><ellipse cx="745.5" cy="197.3" rx="17.5" ry="10.3" transform="rotate(-8.0 745.5 197.3)" fill="#93a1a5" stroke="#000" stroke-width="1" /></g>
<ellipse cx="751.1" cy="184.9" rx="22.8" ry="12.7" transform="rotate(-13.0 751.1 184.9)" fill="none" stroke="#000" stroke-width="1" />
<ellipse cx="594.7" cy="517.4" rx="22.5" ry="11.0" transform="rotate(46.0 594.7 517.4)" fill="url(#gll)" stroke="#000" stroke-width="1" />
<g clip-path="url(#cll)"><ellipse cx="596.0" cy="503.0" rx="13.0" ry="6.5" transform="rotate(32.0 596.0 503.0)" fill="#95a3a7" stroke="#000" stroke-width="1" /></g>
<ellipse cx="594.7" cy="517.4" rx="22.5" ry="11.0" transform="rotate(46.0 594.7 517.4)" fill="none" stroke="#000" stroke-width="1" />
<ellipse cx="879.4" cy="210.0" rx="17.4" ry="9.0" transform="rotate(52.0 879.4 210.0)" fill="url(#gbd)" stroke="#000" stroke-width="1" />
<polyline points="867.9,203.5 870.4,211.0 875.4,218.0 876.9,223.0" fill="none" stroke="#000" stroke-width="1" stroke-linejoin="round" stroke-linecap="round" />
<ellipse cx="975.9" cy="230.8" rx="17.4" ry="9.0" transform="rotate(52.0 975.9 230.8)" fill="url(#gbd)" stroke="#000" stroke-width="1" />
<polyline points="964.4,224.3 966.9,231.8 971.9,238.8 973.4,243.8" fill="none" stroke="#000" stroke-width="1" stroke-linejoin="round" stroke-linecap="round" />
<ellipse cx="751.2" cy="665.0" rx="17.0" ry="8.6" transform="rotate(-17.0 751.2 665.0)" fill="url(#gbc)" stroke="#000" stroke-width="1" />
<ellipse cx="847.5" cy="686.0" rx="17.0" ry="8.6" transform="rotate(-17.0 847.5 686.0)" fill="url(#gbc)" stroke="#000" stroke-width="1" />
<line x1="875" y1="452.6" x2="389" y2="614.5" stroke="#fff" stroke-width="1"/>
<line x1="875.5" y1="30" x2="875.5" y2="453" stroke="#fff" stroke-width="1.3"/>
<circle cx="875.1" cy="453.1" r="7.4" fill="#80ffff" stroke="#fff" stroke-width="1"/>
<path d="M875.1 453.1 L875.1 446 A7 7 0 0 0 868.1 453.1 Z M875.1 453.1 L875.1 460.1 A7 7 0 0 0 882.1 453.1 Z" fill="#000080"/>
<circle cx="875.1" cy="453.1" r="7.4" fill="none" stroke="#fff" stroke-width="1"/>
<text x="388.5" y="291.3" font-family="'Liberation Serif',serif" font-size="18" fill="#fff">Z</text>
<text x="388" y="615" font-family="'Liberation Serif',serif" font-size="18" fill="#fff">Y</text>
<line x1="524" y1="747.6" x2="646" y2="787.6" stroke="#00e400" stroke-width="2"/>
<line x1="716" y1="788.4" x2="1057" y2="673.6" stroke="#00e400" stroke-width="2"/>
<polygon points="499.0,738.4 518.8,753.9 524.2,739.7" fill="#00e400" stroke="none" stroke-width="1" stroke-linejoin="round" /><ellipse cx="521.5" cy="746.8" rx="4.7" ry="7.6" transform="rotate(20.5 521.5 746.8)" fill="#009a00" stroke="none" stroke-width="1" />
<polygon points="669.5,796.6 649.0,781.0 645.0,783.5 643.3,789.0 644.5,794.8" fill="#00e400" stroke="none" stroke-width="1" stroke-linejoin="round" />
<polygon points="669.5,796.6 643.6,790.5 644.5,794.8 650.0,796.0" fill="#00b400" stroke="none" stroke-width="1" stroke-linejoin="round" />
<polygon points="692.5,796.6 713.5,781.0 717.5,783.0 719.8,788.0 719.0,794.8" fill="#00e400" stroke="none" stroke-width="1" stroke-linejoin="round" />
<polygon points="692.5,796.6 719.6,789.5 719.0,794.8 713.0,796.0" fill="#00b400" stroke="none" stroke-width="1" stroke-linejoin="round" />
<polygon points="1082.0,665.6 1057.1,666.2 1062.1,680.6" fill="#009a00" stroke="none" stroke-width="1" stroke-linejoin="round" /><ellipse cx="1059.6" cy="673.4" rx="4.7" ry="7.6" transform="rotate(160.8 1059.6 673.4)" fill="#00e400" stroke="none" stroke-width="1" />
<text x="509.5" y="728" font-family="'Liberation Serif',serif" font-size="17.5" fill="#00e400">Len : 70.0</text>
<text x="1069.5" y="655" font-family="'Liberation Serif',serif" font-size="17.5" fill="#00e400">Dia : 160.0</text>
</svg><div id="cube"><i></i><svg width="64" height="64" style="position:absolute;left:0;top:0"><polygon points="14,23 23.3,14 50.4,14 50.4,41.3 41.1,50.5 14,50.5" fill="#fff"/><path d="M14.5 23.3 H41 V50.5 M41 23.3 L50.4 14" fill="none" stroke="#c4c4c4" stroke-width="1"/></svg></div>
</div>

</body>
</html>
